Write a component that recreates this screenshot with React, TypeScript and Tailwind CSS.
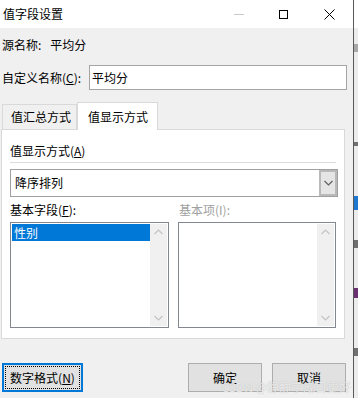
const FONT = "font-['Microsoft_YaHei_UI','Noto_Sans_CJK_SC',sans-serif]";

const Chevron = ({ up = false, color = "#c4c4c4" }: { up?: boolean; color?: string }) => (
  <svg width="9" height="6" viewBox="0 0 9 6">
    <polyline
      points={up ? "0.5,5 4.5,1 8.5,5" : "0.5,1 4.5,5 8.5,1"}
      fill="none"
      stroke={color}
      strokeWidth="1.2"
    />
  </svg>
);

const ListBox = ({ children, width }: { children?: React.ReactNode; width: string }) => (
  <div className={`${width} h-[106px] border border-[#828790] bg-white flex p-px`}>
    <div className="flex-1 flex flex-col">{children}</div>
    <div className="w-[17px] bg-[#f0f0f0] flex flex-col items-center justify-between py-[5px]">
      <Chevron up />
      <Chevron />
    </div>
  </div>
);

export default function App() {
  return (
    <div className={`w-[358px] h-[398px] flex bg-[#f0f0f0] text-[12px] text-black overflow-hidden ${FONT}`}>
      <div className="w-[353px] h-full flex flex-col bg-[#f0f0f0]">
        {/* title bar */}
        <div className="h-[28px] bg-white flex items-center pl-[3px]">
          <span className="text-[12px]">值字段设置</span>
          <div className="ml-auto flex items-center">
            <div className="w-[10px] h-px bg-[#c8c8c8] mr-[35px]" />
            <div className="w-[9px] h-[9px] border border-black mr-[36px]" />
            <svg width="11" height="11" viewBox="0 0 11 11" className="mr-[18px]">
              <path d="M0.5 0.5 L10.5 10.5 M10.5 0.5 L0.5 10.5" stroke="#000" strokeWidth="1" />
            </svg>
          </div>
        </div>

        {/* source name */}
        <div className="mt-[8px] h-[18px] flex items-center pl-[2px]">
          <span>源名称:</span>
          <span className="ml-[9px]">平均分</span>
        </div>

        {/* custom name */}
        <div className="mt-[11px] flex items-center pl-[2px]">
          <span className="w-[87px]">
            自定义名称(<span className="underline">C</span>):
          </span>
          <div className="w-[258px] h-[25px] border border-[#a5a5a5] bg-white flex items-center pl-[2px]">
            平均分
          </div>
        </div>

        {/* tabs */}
        <div className="mt-[12px] h-[27px] flex items-end pl-[2px]">
          <div className="w-[75px] h-[25px] border border-b-0 border-[#d9d9d9] flex items-center pl-[8px]">
            值汇总方式
          </div>
          <div className="relative z-10 w-[81px] h-[28px] -mb-px bg-white border border-b-0 border-[#d9d9d9] flex items-center pl-[10px]">
            值显示方式
          </div>
        </div>
        <div className="ml-px w-[344px] h-[210px] bg-white border border-[#d9d9d9] px-[8px] pt-[13px]">
          <div className="h-[16px] flex items-center">
            值显示方式(<span className="underline">A</span>)
          </div>
          <div className="mt-[3px] h-px bg-[#dcdcdc]" />
          <div className="mt-[6px] w-[328px] h-[28px] border border-[#a0a0a0] flex">
            <div className="flex-1 flex items-center pl-[4px]">降序排列</div>
            <div className="w-[18px] border-2 border-[#b9b9b9] bg-[#e5e5e5] flex items-center justify-center">
              <Chevron color="#606060" />
            </div>
          </div>
          <div className="mt-[5px] h-[16px] flex">
            <span className="w-[169px] flex items-center">
              基本字段(<span className="underline">F</span>):
            </span>
            <span className="flex items-center text-[#a0a0a0]">基本项(I):</span>
          </div>
          <div className="mt-[4px] flex gap-[9px]">
            <ListBox width="w-[160px]">
              <div className="h-[17px] bg-[#0078d7] text-white flex items-center pl-[2px]">性别</div>
            </ListBox>
            <ListBox width="w-[159px]" />
          </div>
        </div>

        {/* buttons */}
        <div className="relative mt-[24px] flex pl-[2px]">
          <div className="w-[81px] h-[29px] border-2 border-[#0078d7] bg-[#e1e1e1] p-px">
            <div className="w-full h-full border border-dotted border-black flex items-center justify-center">
              数字格式(<span className="underline">N</span>)
            </div>
          </div>
          <div className="ml-[105px] w-[74px] h-[29px] border border-[#adadad] bg-[#e1e1e1] flex items-center justify-center">
            确定
          </div>
          <div className="ml-[10px] w-[74px] h-[29px] border border-[#adadad] bg-[#e1e1e1] flex items-center justify-center">
            取消
          </div>
          <span className="absolute right-[2px] top-[15px] text-[12px] text-white/70 [text-shadow:0_0_1px_#b0b0b0]">
            CSDN @静静学成日更好
          </span>
        </div>
      </div>
      {/* window edge and what lies behind */}
      <div className="w-px h-full bg-[#5a5a5a]" />
      <div className="flex-1 h-full flex flex-col bg-[#ececec]">
        <div className="h-[28px] bg-white" />
        <div className="mt-[16px] h-[8px] bg-[#a8a8a8]" />
        <div className="mt-[90px] h-[4px] bg-[#707070]" />
        <div className="mt-[50px] h-[14px] bg-[#1e78d0]" />
        <div className="mt-[30px] h-[8px] bg-[#707070]" />
        <div className="mt-[40px] h-[10px] bg-[#6a3070]" />
        <div className="mt-[50px] h-[8px] bg-[#707070]" />
      </div>
    </div>
  );
}
